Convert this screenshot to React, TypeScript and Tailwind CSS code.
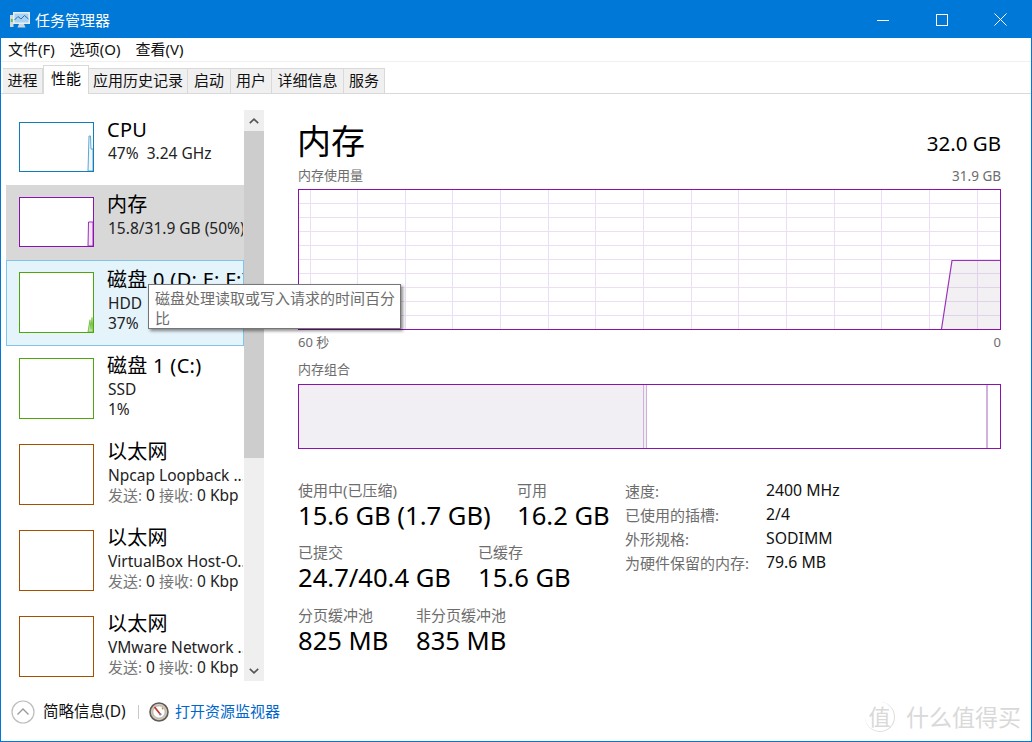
import type { ReactNode } from "react";

const font = "font-['Noto_Sans','Noto_Sans_CJK_SC',sans-serif]";

const tabs = [
  { name: "进程", w: "w-[40px]" },
  { name: "性能", w: "w-[46px]", active: true },
  { name: "应用历史记录", w: "w-[99px]" },
  { name: "启动", w: "w-[43px]" },
  { name: "用户", w: "w-[41px]" },
  { name: "详细信息", w: "w-[72px]" },
  { name: "服务", w: "w-[41px]" },
];

const Thumb = ({ color, h, children }: { color: string; h: string; children?: ReactNode }) => (
  <div className={`relative w-[75px] shrink-0 border bg-white ${h} ${color}`}>{children}</div>
);

const Spark = ({ d, fill, stroke }: { d: string; fill: string; stroke: string }) => (
  <svg className="absolute inset-0 h-full w-full" viewBox="0 0 73 48" preserveAspectRatio="none">
    <path d={d} fill={fill} stroke={stroke} strokeWidth="1" />
  </svg>
);

const SideItem = ({
  title,
  lines,
  thumb,
  state,
  tall = true,
}: {
  title: string;
  lines: ReactNode[];
  thumb: ReactNode;
  state?: "selected" | "hover";
  tall?: boolean;
}) => {
  const bg =
    state === "selected"
      ? "bg-[#d8d8d8] border-[#d8d8d8]"
      : state === "hover"
        ? "bg-[#e5f3fb] border-[#7fc4ea]"
        : "bg-white border-white";
  return (
    <div className={`flex gap-[13px] overflow-hidden border pl-[12px] ${bg} ${tall ? "h-[86px]" : "h-[75px]"}`}>
      <div className="pt-[11px]">{thumb}</div>
      <div className="min-w-0 flex-1 pt-[7px] whitespace-nowrap">
        <div className="text-[20px] leading-[24px] tracking-[0.3px] text-black">{title}</div>
        {lines.map((l, i) => (
          <div key={i} className={`pl-px text-[15.5px] leading-[20px] text-[#222] ${i === 0 ? "mt-px" : ""}`}>
            {l}
          </div>
        ))}
      </div>
    </div>
  );
};

const NetLine = () => (
  <>
    <span className="text-[15px] text-[#767676]">发送:</span> 0 <span className="text-[15px] text-[#767676]">接收:</span> 0 Kbp
  </>
);

const MemoryGraph = () => {
  const vx = Array.from({ length: 15 }, (_, i) => Math.round(11.5 + i * 47.65) + 0.5);
  const hy = Array.from({ length: 9 }, (_, i) => 14 + i * 14);
  return (
    <svg className="block h-[141px] w-full" viewBox="0 0 703 141">
      {vx.map((x) => (
        <line key={x} x1={x} x2={x} y1="1" y2="140" stroke="#ecdff3" strokeWidth="1" />
      ))}
      {hy.map((y) => (
        <line key={y} x1="1" x2="702" y1={y + 0.5} y2={y + 0.5} stroke="#ecdff3" strokeWidth="1" />
      ))}
      <path d="M643.5 140 L654 71.5 L702 71.5 L702 140 Z" fill="#5a3a6a" fillOpacity="0.08" />
      <path d="M643.5 140 L654 71.5 L702 71.5" fill="none" stroke="#9b30bb" strokeWidth="1.2" />
      <rect x="0.5" y="0.5" width="702" height="140" fill="none" stroke="#8b12ae" />
    </svg>
  );
};

const Stat = ({ label, value, w }: { label: string; value: string; w: string }) => (
  <div className={`${w} shrink-0 whitespace-nowrap`}>
    <div className="text-[15px] leading-[20px] text-[#6d6d6d]">{label}</div>
    <div className="text-[25.6px] leading-[32px] text-black">{value}</div>
  </div>
);

const specs = [
  ["速度:", "2400 MHz"],
  ["已使用的插槽:", "2/4"],
  ["外形规格:", "SODIMM"],
  ["为硬件保留的内存:", "79.6 MB"],
];

export default function App() {
  return (
    <div className={`relative flex h-[742px] w-[1032px] flex-col overflow-hidden border border-[#0078d7] bg-white ${font}`}>
      {/* title bar */}
      <div className="flex h-[37px] shrink-0 items-center bg-[#0078d7] pl-[9px] text-white">
        <svg width="20" height="18" viewBox="0 0 20 18" className="mr-[5px]">
          <rect x="0" y="4" width="3.5" height="12" fill="#d8d8d8" />
          <rect x="0.8" y="8" width="2" height="3" fill="#5cc05c" />
          <rect x="3" y="1" width="17" height="12" fill="#e8eef2" />
          <rect x="4.5" y="2.5" width="14" height="9" fill="#a9d3f2" />
          <path d="M4.5 9 L8 5.5 L11 8 L14.5 4.5 L18.5 8" fill="none" stroke="#2a6fb5" strokeWidth="1" />
          <path d="M9 13 H14 L15.5 16.5 H7.5 Z" fill="#cfd6da" />
        </svg>
        <span className="text-[15px] leading-[20px]">任务管理器</span>
        <div className="ml-auto flex h-full pr-[2px]">
          <div className="flex w-[58px] items-center justify-center pr-[2px]">
            <svg width="12" height="12" viewBox="0 0 12 12"><path d="M0 6.5 H12" stroke="#fff" /></svg>
          </div>
          <div className="flex w-[58px] items-center justify-center">
            <svg width="12" height="12" viewBox="0 0 12 12"><rect x="0.5" y="0.5" width="11" height="11" fill="none" stroke="#fff" /></svg>
          </div>
          <div className="flex w-[58px] items-center justify-center">
            <svg width="13" height="13" viewBox="0 0 13 13"><path d="M0.5 0.5 L12.5 12.5 M12.5 0.5 L0.5 12.5" stroke="#fff" /></svg>
          </div>
        </div>
      </div>

      {/* menu */}
      <div className="flex h-[24px] shrink-0 items-center gap-[15px] border-b border-[#f0f0f0] pl-[7px] text-[15px] text-[#111]">
        <span>文件(F)</span>
        <span>选项(O)</span>
        <span>查看(V)</span>
      </div>

      {/* tabs */}
      <div className="flex h-[32px] shrink-0 items-end border-b border-[#d9d9d9] pl-[2px]">
        {tabs.map((t) =>
          t.active ? (
            <div
              key={t.name}
              className={`${t.w} relative -mb-px flex h-[29px] items-center justify-center border border-b-0 border-[#d9d9d9] bg-white pb-[3px] text-[15px] text-black`}
            >
              {t.name}
            </div>
          ) : (
            <div
              key={t.name}
              className={`${t.w} flex h-[25px] items-center justify-center border-t border-r border-[#d9d9d9] bg-[#f0f0f0] pb-px text-[15px] whitespace-nowrap text-[#111]`}
            >
              {t.name}
            </div>
          ),
        )}
      </div>

      {/* body */}
      <div className="flex min-h-0 flex-1">
        <div className="ml-[5px] flex h-[587px] shrink-0 pt-[16px]">
          <div className="h-[571px] w-[238px] overflow-hidden">
            <SideItem
              tall={false}
              title="CPU"
              lines={["47%\u00a0\u00a03.24 GHz"]}
              thumb={
                <Thumb color="border-[#117dbb]" h="h-[50px]">
                  <Spark d="M68 48 L69 13 L70.5 13 L71 26 L73 26 L73 48 Z" fill="#f1f6fa" stroke="#5ea6d0" />
                </Thumb>
              }
            />
            <SideItem
              state="selected"
              tall={false}
              title="内存"
              lines={["15.8/31.9 GB (50%)"]}
              thumb={
                <Thumb color="border-[#8b12ae]" h="h-[50px]">
                  <Spark d="M68 48 L68.5 24 L73 24 L73 48 Z" fill="#f1e3f4" stroke="#9b30bb" />
                </Thumb>
              }
            />
            <SideItem
              state="hover"
              title="磁盘 0 (D: E: F:)"
              lines={["HDD", "37%"]}
              thumb={
                <Thumb color="border-[#4da60c]" h="h-[61px]">
                  <Spark d="M68 48 L70 38 L71 46 L72 36 L73 48 Z" fill="#bfe3a5" stroke="#7cc04c" />
                </Thumb>
              }
            />
            <SideItem
              title="磁盘 1 (C:)"
              lines={["SSD", "1%"]}
              thumb={<Thumb color="border-[#4da60c]" h="h-[61px]" />}
            />
            <SideItem
              title="以太网"
              lines={["Npcap Loopback ...", <NetLine key="a" />]}
              thumb={<Thumb color="border-[#a74f01]" h="h-[61px]" />}
            />
            <SideItem
              title="以太网"
              lines={["VirtualBox Host-O...", <NetLine key="b" />]}
              thumb={<Thumb color="border-[#a74f01]" h="h-[61px]" />}
            />
            <SideItem
              title="以太网"
              lines={["VMware Network ...", <NetLine key="c" />]}
              thumb={<Thumb color="border-[#a74f01]" h="h-[61px]" />}
            />
          </div>
          {/* scrollbar */}
          <div className="flex h-[571px] w-[20px] flex-col bg-[#efefef]">
            <div className="flex h-[21px] items-center justify-center">
              <svg width="10" height="6" viewBox="0 0 10 6"><path d="M0.8 5.2 L5 1.2 L9.2 5.2" fill="none" stroke="#555" strokeWidth="1.6" /></svg>
            </div>
            <div className="h-[327px] bg-[#cdcdcd]" />
            <div className="mt-auto flex h-[21px] items-center justify-center">
              <svg width="10" height="6" viewBox="0 0 10 6"><path d="M0.8 0.8 L5 4.8 L9.2 0.8" fill="none" stroke="#555" strokeWidth="1.6" /></svg>
            </div>
          </div>
        </div>

        {/* main panel */}
        <div className="ml-[34px] w-[703px] shrink-0 pt-[21px]">
          <div className="flex h-[52px] items-center justify-between">
            <span className="-ml-px text-[34px] leading-[48px] text-black">内存</span>
            <span className="pt-[3px] text-[20.5px] leading-[28px] text-black">32.0 GB</span>
          </div>
          <div className="flex h-[22px] items-center justify-between pb-[4px] text-[13px] text-[#6d6d6d]">
            <span>内存使用量</span>
            <span className="text-[13.5px]">31.9 GB</span>
          </div>
          <MemoryGraph />
          <div className="flex h-[26px] items-center justify-between text-[13px] text-[#6d6d6d]">
            <span>60 秒</span>
            <span>0</span>
          </div>
          <div className="flex h-[28px] items-center text-[13px] text-[#6d6d6d]">内存组合</div>
          <div className="flex h-[65px] border border-[#8b12ae]">
            <div className="w-[344px] bg-[#f2eff4]" />
            <div className="w-[4px] border-x border-[#d0b0de] bg-[#f2eff4]" />
            <div className="w-[339px]" />
            <div className="w-[2px] bg-[#d0b0de]" />
          </div>

          <div className="mt-[31px] flex">
            <div className="w-[327px] shrink-0">
              <div className="flex h-[62px]">
                <Stat w="w-[219px]" label="使用中(已压缩)" value="15.6 GB (1.7 GB)" />
                <Stat w="w-[100px]" label="可用" value="16.2 GB" />
              </div>
              <div className="flex h-[63px]">
                <Stat w="w-[180px]" label="已提交" value="24.7/40.4 GB" />
                <Stat w="w-[130px]" label="已缓存" value="15.6 GB" />
              </div>
              <div className="flex">
                <Stat w="w-[118px]" label="分页缓冲池" value="825 MB" />
                <Stat w="w-[130px]" label="非分页缓冲池" value="835 MB" />
              </div>
            </div>
            <div className="-mt-px grid auto-rows-[24px] grid-cols-[141px_auto] items-center">
              {specs.map(([k, v]) => (
                <div key={k} className="contents">
                  <span className="text-[15px] text-[#6d6d6d]">{k}</span>
                  <span className="text-[15.8px] text-[#111]">{v}</span>
                </div>
              ))}
            </div>
          </div>
        </div>
      </div>

      {/* footer */}
      <div className="flex h-[50px] shrink-0 items-center pb-[9px] pl-[10px]">
        <svg width="24" height="24" viewBox="0 0 24 24">
          <circle cx="12" cy="12" r="11" fill="#fff" stroke="#bcbcbc" strokeWidth="1.2" />
          <path d="M6.5 14.5 L12 9 L17.5 14.5" fill="none" stroke="#9a9a9a" strokeWidth="1.4" />
        </svg>
        <span className="ml-[8px] w-[87px] text-[15.5px] whitespace-nowrap text-[#111]">简略信息(D)</span>
        <div className="ml-[8px] h-[14px] w-px bg-[#c8c8c8]" />
        <svg width="20" height="20" viewBox="0 0 20 20" className="ml-[10px]">
          <circle cx="10" cy="10" r="9" fill="#cfc9bf" stroke="#5f5a52" strokeWidth="1.6" />
          <circle cx="10" cy="10" r="6.2" fill="#fff" stroke="#a8a298" strokeWidth="0.8" />
          <path d="M5.5 5 L11.5 12.5" stroke="#c8302a" strokeWidth="1.7" />
          <path d="M13 5.5 L14 7.5" stroke="#e08a3a" strokeWidth="1.2" />
          <circle cx="11.3" cy="12.3" r="1.2" fill="#8c8c8c" />
        </svg>
        <span className="ml-[6px] text-[15px] text-[#0066cc]">打开资源监视器</span>
      </div>

      {/* tooltip over the list */}
      <div className="absolute top-[283px] left-[147px] h-[45px] w-[253px] border border-[#767676] bg-white py-[3px] pr-[4px] pl-[6px] text-[15px] leading-[20px] text-[#6d6d6d] shadow-[2px_2px_3px_rgba(0,0,0,0.45)]">
        磁盘处理读取或写入请求的时间百分比
      </div>

      {/* watermark */}
      <div className="absolute top-[701px] left-[864px] flex items-center gap-[11px] text-[#d9d9d9]">
        <div className="flex h-[30px] w-[30px] items-center justify-center rounded-full border-r border-b border-[#dcdcdc] text-[22px]">值</div>
        <span className="text-[23px] leading-[30px]">什么值得买</span>
      </div>
    </div>
  );
}
